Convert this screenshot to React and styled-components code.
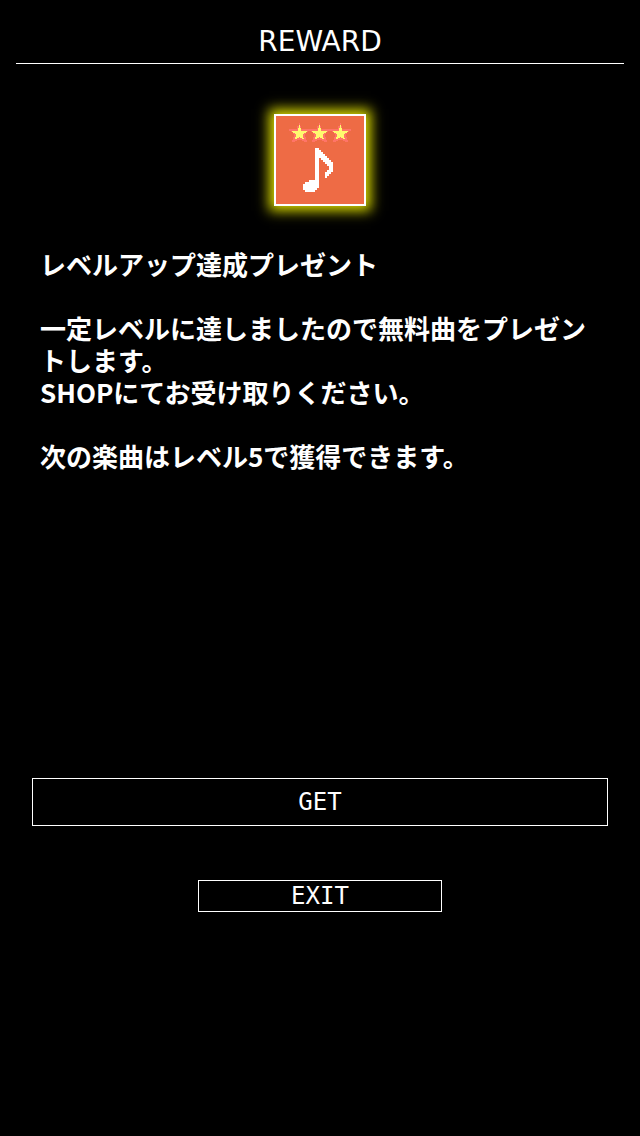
import React from 'react';
import styled, { createGlobalStyle } from 'styled-components';

const STARS = [0, 20, 41];

const RewardIcon = () => {
    return (
        <IconFrame>
            <svg width="88" height="88" viewBox="0 0 88 88" shapeRendering="crispEdges" role="img" aria-label="Reward">
                {STARS.map((x) => (
                    <g key={x} transform={`translate(${x} 0)`}>
                        <path
                            d="M23 7h1v3h1v3h9v2h-2v1h-2v2h-1v3h1v3h1v2h-3v-1h-2v-1h-5v1h-2v1h-3v-2h1v-3h1v-3h-1v-2h-2v-1h-2v-2h8v-3h2z"
                            fill="#ff7468"
                        />
                        <path
                            d="M23.5 9l2 6h6l-5 4 2 5-5-3-5 3 2-5-5-4h6z"
                            fill="#fffa6e"
                        />
                    </g>
                ))}
                <path
                    d="M39 32h4v2h2v2h2v2h2v2h2v2h2v2h2v2h2v10h-2v2h-2v2h-2v2h-2v-6h2v-2h2v-4h-2v-2h-2v-2h-2v-2h-2v-2h-2v30h-2v2h-2v2h-10v-2h-2v-6h2v-2h4v-2h6z"
                    fill="#fff"
                />
            </svg>
        </IconFrame>
    );
};

const App = () => {
    return (
        <>
            <GlobalStyle />
            <Page>
                <Header>
                    <Title>REWARD</Title>
                </Header>
                <RewardIcon />
                <Message>
                    <p>レベルアップ達成プレゼント</p>
                    <p>
                        {'一定レベルに達しましたので無料曲をプレゼントします。\nSHOPにてお受け取りください。'}
                    </p>
                    <p>次の楽曲はレベル5で獲得できます。</p>
                </Message>
                <Actions>
                    <GetButton type="button">GET</GetButton>
                    <ExitButton type="button">EXIT</ExitButton>
                </Actions>
            </Page>
        </>
    );
};

export default App;

const GlobalStyle = createGlobalStyle`
    * {
        box-sizing: border-box;
    }

    body {
        margin: 0;
        background-color: #000;
        color: #fff;
    }
`;

const Page = styled.main`
    display: flex;
    flex-direction: column;
    align-items: center;
    min-height: 100vh;
    padding: 16px;
`;

const Header = styled.header`
    align-self: stretch;
    height: 48px;
    margin-bottom: 50px;
    border-bottom: 1px solid #fff;
    text-align: center;
`;

const Title = styled.h1`
    margin: 0;
    font-family: 'DejaVu Sans', sans-serif;
    font-size: 28px;
    font-weight: 400;
    line-height: 52px;
`;

const IconFrame = styled.div`
    width: 92px;
    height: 92px;
    border: 2px solid #fff;
    background-color: #ee6b45;
    box-shadow: 0 0 12px 5px #d8d800;

    svg {
        display: block;
    }
`;

const Message = styled.section`
    display: flex;
    flex-direction: column;
    align-self: stretch;
    gap: 32px;
    min-height: 530px;
    margin-top: 42px;
    padding: 0 24px;
    font-family: 'Noto Sans CJK JP', sans-serif;
    font-size: 26px;
    font-weight: 700;
    line-height: 32px;
    white-space: pre-line;

    p {
        margin: 0;
    }
`;

const Actions = styled.div`
    display: flex;
    flex-direction: column;
    align-items: center;
    align-self: stretch;
    gap: 54px;
    padding: 0 16px;
`;

const Button = styled.button`
    padding: 0;
    border: 1px solid #fff;
    background-color: #000;
    color: #fff;
    font-family: 'DejaVu Sans Mono', monospace;
    font-size: 24px;
    cursor: pointer;
`;

const GetButton = styled(Button)`
    width: 100%;
    height: 48px;
`;

const ExitButton = styled(Button)`
    width: 244px;
    height: 32px;
`;
